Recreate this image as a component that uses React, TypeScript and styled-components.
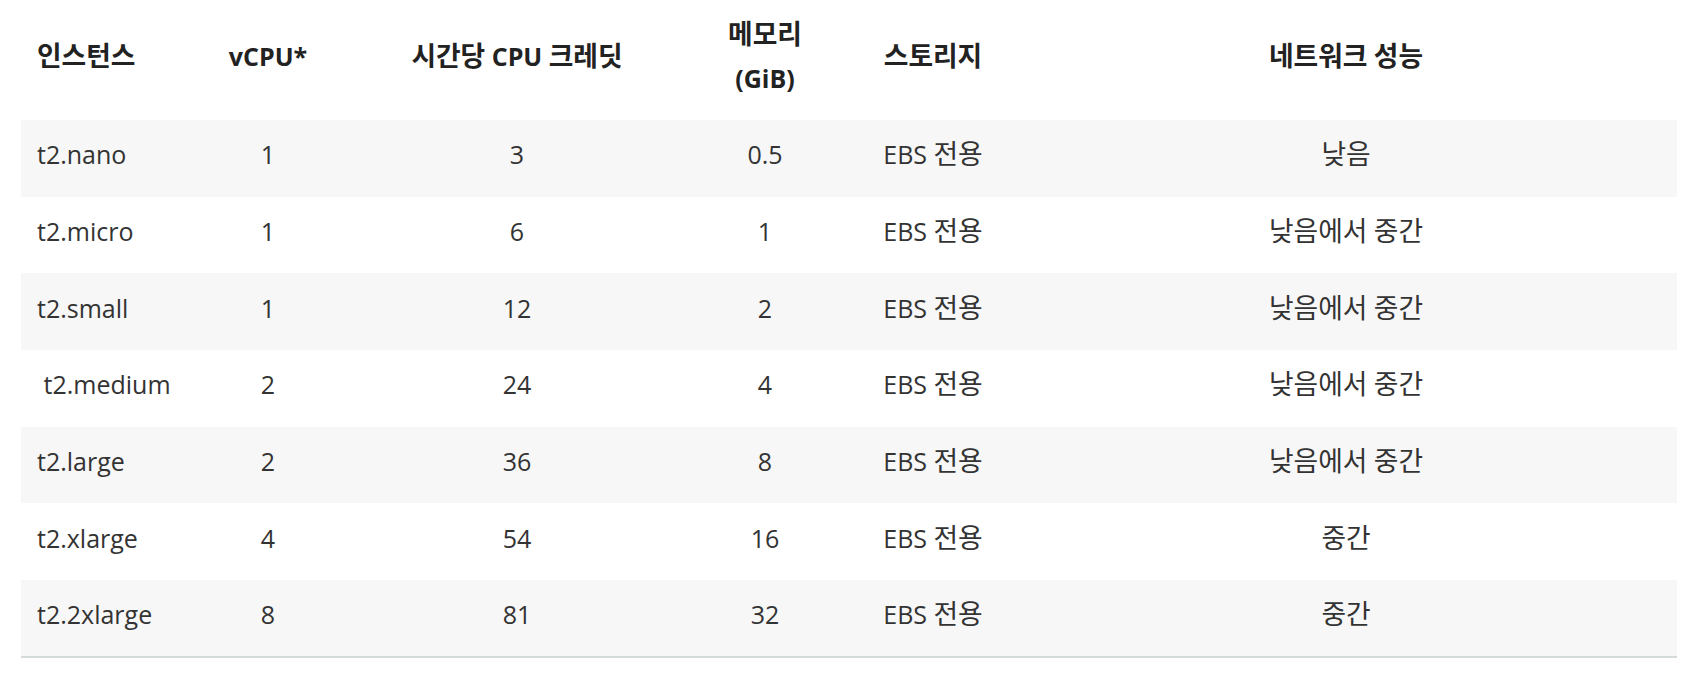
import React from "react";
import styled, { createGlobalStyle } from "styled-components";

const GlobalStyle = createGlobalStyle`
  html, body {
    margin: 0;
    padding: 0;
    background: #ffffff;
  }
  body {
    font-family: "Open Sans", "Noto Sans CJK KR", sans-serif;
  }
`;

const Page = styled.div`
  padding: 0 25px 0 21px;
`;

const Table = styled.table`
  width: 1656px;
  table-layout: fixed;
  border-collapse: collapse;
  border-spacing: 0;
  font-family: "Open Sans", "Noto Sans CJK KR", sans-serif;
  font-size: 25px;
  border-bottom: 2px solid #d5dbdb;
`;

const HeadRow = styled.tr`
  height: 120px;
`;

const HeadCell = styled.th<{ $align?: "left" | "center" }>`
  padding: 0 0 8px ${(p) => (p.$align === "left" ? "16px" : "0")};
  text-align: ${(p) => p.$align ?? "center"};
  vertical-align: middle;
  font-weight: 700;
  color: #222222;
  line-height: 44px;
`;

const BodyRow = styled.tr<{ $striped: boolean }>`
  height: 76.7px;
  background: ${(p) => (p.$striped ? "#f7f7f7" : "#ffffff")};
`;

const Cell = styled.td<{ $align?: "left" | "center" }>`
  padding: 0 0 8px ${(p) => (p.$align === "left" ? "16px" : "0")};
  text-align: ${(p) => p.$align ?? "center"};
  vertical-align: middle;
  font-weight: 400;
  color: #333333;
  line-height: 44px;
  white-space: nowrap;
`;

const Hangul = styled.span`
  font-family: "Noto Sans CJK KR", sans-serif;
  font-size: 1.07em;
  line-height: 1;
`;

function Text({ value }: { value: string }) {
  const parts = value.split(/([\uAC00-\uD7A3]+)/);
  return (
    <>
      {parts.map((p, i) =>
        /[\uAC00-\uD7A3]/.test(p) ? <Hangul key={i}>{p}</Hangul> : p
      )}
    </>
  );
}

const widths = [160, 174, 324, 172, 164, 662];

const rows: string[][] = [
  ["t2.nano", "1", "3", "0.5", "EBS 전용", "낮음"],
  ["t2.micro", "1", "6", "1", "EBS 전용", "낮음에서 중간"],
  ["t2.small", "1", "12", "2", "EBS 전용", "낮음에서 중간"],
  ["\u00a0t2.medium", "2", "24", "4", "EBS 전용", "낮음에서 중간"],
  ["t2.large", "2", "36", "8", "EBS 전용", "낮음에서 중간"],
  ["t2.xlarge", "4", "54", "16", "EBS 전용", "중간"],
  ["t2.2xlarge", "8", "81", "32", "EBS 전용", "중간"],
];

export default function App() {
  return (
    <>
      <GlobalStyle />
      <Page>
        <Table>
          <colgroup>
            {widths.map((w, i) => (
              <col key={i} style={{ width: w }} />
            ))}
          </colgroup>
          <thead>
            <HeadRow>
              <HeadCell $align="left">
                <Text value="인스턴스" />
              </HeadCell>
              <HeadCell>vCPU*</HeadCell>
              <HeadCell>
                <Text value="시간당 CPU 크레딧" />
              </HeadCell>
              <HeadCell>
                <Text value="메모리" />
                <br />
                (GiB)
              </HeadCell>
              <HeadCell>
                <Text value="스토리지" />
              </HeadCell>
              <HeadCell>
                <Text value="네트워크 성능" />
              </HeadCell>
            </HeadRow>
          </thead>
          <tbody>
            {rows.map((r, i) => (
              <BodyRow key={i} $striped={i % 2 === 0}>
                {r.map((c, j) => (
                  <Cell key={j} $align={j === 0 ? "left" : "center"}>
                    <Text value={c} />
                  </Cell>
                ))}
              </BodyRow>
            ))}
          </tbody>
        </Table>
      </Page>
    </>
  );
}
